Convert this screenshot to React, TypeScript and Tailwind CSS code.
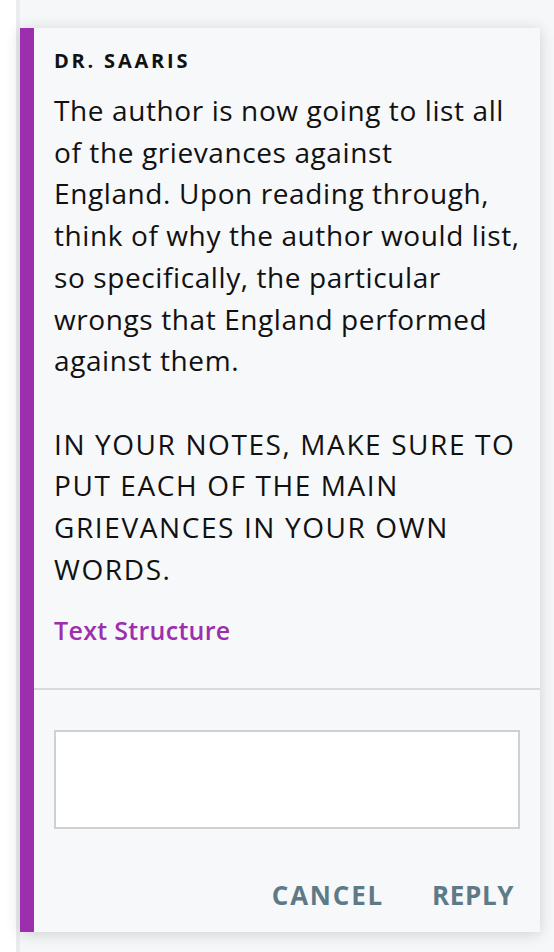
import React from "react";

const font = { fontFamily: "'Open Sans', Lato, sans-serif" };

export default function App() {
  const body1 = [
    "The author is now going to list all",
    "of the grievances against",
    "England. Upon reading through,",
    "think of why the author would list,",
    "so specifically, the particular",
    "wrongs that England performed",
    "against them.",
  ];
  const body2 = [
    "IN YOUR NOTES, MAKE SURE TO",
    "PUT EACH OF THE MAIN",
    "GRIEVANCES IN YOUR OWN",
    "WORDS.",
  ];
  return (
    <div className="flex h-[952px] w-[554px] bg-white" style={font}>
      <div className="w-[16px] shrink-0 bg-white" />
      <div className="w-[4px] shrink-0 bg-[#eaecef]" />
      <div className="flex-1 bg-[#f6f7f9] pt-[28px]">
        <div className="flex w-[520px] bg-[#f7f8fa] shadow-[0_2px_14px_rgba(0,0,0,0.16)]">
          <div className="w-[14px] shrink-0 bg-[#9c2fae]" />
          <div className="flex flex-1 flex-col">
            <div className="pl-[20px] pr-[20px] pt-[19px] pb-[42px]">
              <div className="text-[20px] font-bold leading-[28px] tracking-[2.8px] text-[#111111]">
                DR. SAARIS
              </div>
              <div className="mt-[15px] text-[28px] leading-[41.7px] text-[#111111]">
                <div className="tracking-[0.6px]">
                  {body1.map((l) => (
                    <div key={l} className="whitespace-nowrap">{l}</div>
                  ))}
                </div>
                <div className="h-[41.7px]" />
                <div className="tracking-[1.6px]">
                  {body2.map((l) => (
                    <div key={l} className="whitespace-nowrap">{l}</div>
                  ))}
                </div>
              </div>
              <div className="mt-[24px] text-[25px] font-semibold leading-[32px] tracking-[0.3px] text-[#9c2fae]">
                Text Structure
              </div>
            </div>
            <div className="h-[1.5px] bg-[#d9dadc]" />
            <div className="pl-[20px] pr-[20px] pt-[40px]">
              <div className="h-[99px] w-[466px] border-2 border-[#cfd0d2] bg-white" />
            </div>
            <div className="flex justify-end gap-[48px] pr-[26px] pt-[50px] pb-[21px] text-[26px] font-bold leading-[32px] text-[#5f7a87]">
              <span className="tracking-[1.8px]">CANCEL</span>
              <span className="tracking-[0.6px]">REPLY</span>
            </div>
          </div>
        </div>
      </div>
    </div>
  );
}
